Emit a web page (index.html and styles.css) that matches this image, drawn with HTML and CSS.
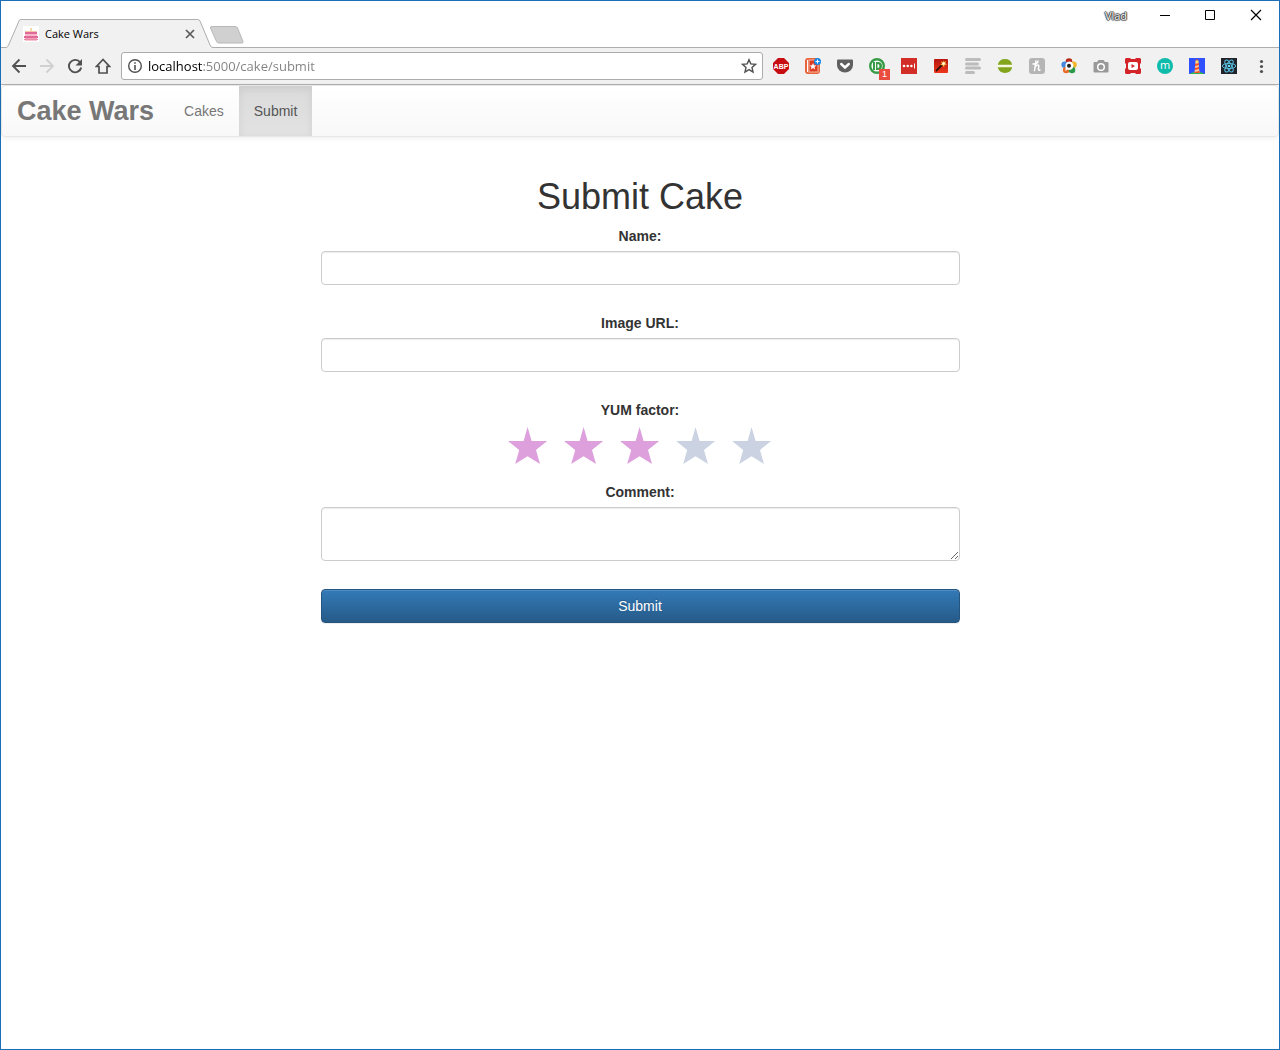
FILE: index.html
```html
<!DOCTYPE html>
<html lang="en">
<head>
<meta charset="utf-8">
<meta name="viewport" content="width=device-width, initial-scale=1">
<title>Cake Wars</title>
<link rel="stylesheet" href="styles.css">
</head>
<body>
<div class="window">
  <header class="tabstrip">
    <div class="tab">
      <svg class="tab-shape" width="208" height="29" viewBox="0 0 208 29" aria-hidden="true"><path d="M0 28.500H1.500Q3 28 4 25L14 2Q14.500.500 16 .500H192.500Q194.500.500 195 2L205 26Q206 28.500 208 28.500V29H0Z" fill="#f1f1f1"/><path d="M0 28.500H1.500Q3 28 4 25L14 2Q14.500.500 16 .500H192.500Q194.500.500 195 2L205 26Q206 28.500 208 28.500" fill="none" stroke="#aeaeae"/></svg>
      <svg class="icon" viewBox="0 0 16 16" aria-hidden="true"><path fill="#fff" d="M0 0h16v16H0z"/><path fill="#f5d7b0" d="M7 2h2v4H7z"/><path fill="#f3c6a5" d="M2 5h12v1H2z"/><path fill="#e0699a" d="M2 6h12v2H2z"/><path fill="#f6b9c8" d="M2 8h12v2H2z"/><path fill="#e0699a" d="M1 10h14v2H1z"/><path fill="#f3a0b6" d="M2 12h12v1H2z"/><path fill="#e98aa8" d="M1 13h14v1H1z"/><path fill="#f7c3cf" d="M2 14h12v1H2z"/></svg>
      <span class="tab-title">Cake Wars</span>
      <button class="tab-close" aria-label="Close tab"><svg width="10" height="10" viewBox="0 0 10 10"><path d="M1 1l8 8M9 1L1 9" stroke="#5a5a5a" stroke-width="1.700"/></svg></button>
    </div>
    <button class="new-tab" aria-label="New tab"><svg width="36" height="18" viewBox="0 0 36 18"><path d="M3 .500H26Q28 .500 28.500 2L34 15.500Q34.500 17 33 17H10Q8 17 7.500 15.500L1.500 2Q1 .500 3 .500Z" fill="#d0d0d0" stroke="#b8b8b8"/></svg></button>
    <div class="window-controls">
      <button class="profile">Vlad</button>
      <button class="control" aria-label="Minimize"><svg width="12" height="12" viewBox="0 0 12 12"><path d="M2 6.500h10" stroke="#000"/></svg></button>
      <button class="control" aria-label="Maximize"><svg width="12" height="12" viewBox="0 0 12 12"><path d="M1.500 1.500h9v9h-9z" fill="none" stroke="#000"/></svg></button>
      <button class="control" aria-label="Close"><svg width="12" height="12" viewBox="0 0 12 12"><path d="M1 1l10 10M11 1L1 11" stroke="#000" stroke-width="1.200"/></svg></button>
    </div>
  </header>

  <div class="toolbar">
    <button class="tool" aria-label="Back"><svg class="icon" viewBox="0 0 16 16"><path d="M15 8H2.500M8.500 1.500L2 8l6.500 6.500" fill="none" stroke="#505050" stroke-width="1.800"/></svg></button>
    <button class="tool" aria-label="Forward"><svg class="icon" viewBox="0 0 16 16"><path d="M1 8h12.500M7.500 1.500L14 8l-6.500 6.500" fill="none" stroke="#d0d0d0" stroke-width="1.800"/></svg></button>
    <button class="tool" aria-label="Reload"><svg class="icon" viewBox="0 0 16 16"><path d="M13.200 4.500A6.200 6.200 0 1 0 14.200 9.500" fill="none" stroke="#505050" stroke-width="1.900"/><path d="M15 1v6.500H8.500z" fill="#505050"/></svg></button>
    <button class="tool" aria-label="Home"><svg class="icon" viewBox="0 0 16 16"><path d="M8 1.500L1.500 8.500H4V15h8V8.500h2.500z" fill="none" stroke="#505050" stroke-width="1.700"/></svg></button>
    <div class="address">
      <svg class="icon" viewBox="0 0 16 16" aria-hidden="true"><circle cx="8" cy="8" r="6.300" fill="none" stroke="#505050" stroke-width="1.400"/><path d="M7.200 7h1.600v5H7.200zM7.200 4.200h1.600v1.600H7.200z" fill="#505050"/></svg>
      <input class="url" type="text" value="localhost:5000/cake/submit" aria-label="Address">
      <button class="bookmark" aria-label="Bookmark this page"><svg class="icon" viewBox="0 0 16 16"><path d="M8 1.700l1.800 4.200 4.700.4-3.500 3.100 1 4.600L8 11.600 4 14l1-4.600L1.500 6.300l4.700-.4z" fill="none" stroke="#505050" stroke-width="1.400"/></svg></button>
    </div>
    <button class="ext" aria-label="Adblock Plus"><svg class="icon" viewBox="0 0 16 16"><path d="M5 0h6l5 5v6l-5 5H5l-5-5V5z" fill="#c70d12"/><text x="8" y="11" class="abp">ABP</text></svg></button>
    <button class="ext" aria-label="Bookmark manager"><svg class="icon" viewBox="0 0 16 16"><rect width="15" height="16" rx="3" fill="#e8643c"/><path d="M2 2h1v12H2z" fill="#fff"/><rect x="4" y="2" width="9" height="12" fill="#dc3a20" stroke="#f4bba5"/><path d="M8 5l1 2.200 2.500.2-2 1.600.7 2.500L8 10l-2.200 1.500.7-2.500-2-1.600 2.500-.2z" fill="#fff"/><circle cx="12.500" cy="3.500" r="3.500" fill="#1686e8"/><path d="M12.500 1.500v4M10.500 3.500h4" stroke="#fff"/></svg></button>
    <button class="ext" aria-label="Pocket"><svg class="icon" viewBox="0 0 16 16"><path d="M1 1.500h14q1 0 1 1V7a8 7.500 0 0 1-16 0V2.500q0-1 1-1z" fill="#606060"/><path d="M4.200 6L8 9.500 11.800 6" fill="none" stroke="#fff" stroke-width="2.400" stroke-linecap="round"/></svg></button>
    <button class="ext" aria-label="Pushbullet, 1 notification"><svg class="icon" viewBox="0 0 16 16"><circle cx="8" cy="8" r="6.800" fill="#fff" stroke="#389b47" stroke-width="2.400"/><path d="M4 4h2v8H4zM7 4h2q4 0 4 4t-4 4H7z" fill="#389b47"/><path d="M8.500 6q2 0 2 2t-2 2z" fill="#fff"/></svg><span class="badge">1</span></button>
    <button class="ext" aria-label="LastPass"><svg class="icon" viewBox="0 0 16 16"><path d="M0 0h16v16H0z" fill="#d32d27"/><circle cx="3" cy="8" r="1.300" fill="#fff"/><circle cx="6.700" cy="8" r="1.300" fill="#fff"/><circle cx="10.400" cy="8" r="1.300" fill="#fff"/><path d="M13.500 5.500v5" stroke="#fff"/></svg></button>
    <button class="ext" aria-label="Magic wand"><svg class="icon" viewBox="0 0 16 16"><defs><linearGradient id="wand" x2="0" y2="1"><stop stop-color="#b5160d"/><stop offset="1" stop-color="#f0371c"/></linearGradient></defs><rect x="1" y="1" width="14" height="14" rx="1" fill="url(#wand)"/><path d="M3 13l6-6" stroke="#30100a" stroke-width="1.800"/><path d="M10 2l.8 2.200L13 3l-.8 2.200L14 6.500l-2.500.2L11 9.500 9.800 7.200 7.500 7l1.500-1.500L8 3.500l2 .7z" fill="#ffcf4a"/><circle cx="10.600" cy="5.600" r="1.200" fill="#fff"/></svg></button>
    <button class="ext" aria-label="Lines"><svg class="icon" viewBox="0 0 16 16"><path d="M1.500 1.500h13M1.500 6h11M1.500 10h13M1.500 14.500h7" stroke="#bcbcbc" stroke-width="3" stroke-linecap="round"/></svg></button>
    <button class="ext" aria-label="Green circle"><svg class="icon" viewBox="0 0 16 16"><path d="M.800 6.800a7.400 7.400 0 0 1 14.400 0z" fill="#83a51b"/><path d="M.800 9.200a7.400 7.400 0 0 0 14.400 0z" fill="#83a51b"/><path d="M0 7h16v2H0z" fill="#f5f9df"/></svg></button>
    <button class="ext" aria-label="Honey"><svg class="icon" viewBox="0 0 16 16"><rect width="16" height="16" rx="3" fill="#b5b5b5"/><path d="M7 3L5.500 12.500M6 9C8 6 10.500 6.500 9.700 9c-.7 2.500-.2 3.500 1.300 3M4 6c3 0 5-1 5-3" fill="none" stroke="#fff" stroke-width="1.500" stroke-linecap="round"/></svg></button>
    <button class="ext" aria-label="Photo colors"><svg class="icon" viewBox="0 0 16 16"><circle cx="8" cy="3.600" r="3.300" fill="#b92819"/><circle cx="3.700" cy="6.700" r="3.300" fill="#4788dd"/><circle cx="12.500" cy="6.700" r="3.300" fill="#f0b72c"/><circle cx="5.200" cy="12" r="3.300" fill="#e66b25"/><circle cx="11" cy="12" r="3.300" fill="#2d9a4a"/><path d="M8 3.500a4.200 4.200 0 1 1-1.500 8L4.500 13V7.500a4 4 0 0 1 3.500-4z" fill="#fff"/><circle cx="8" cy="7.800" r="2" fill="#202020"/></svg></button>
    <button class="ext" aria-label="Screenshot"><svg class="icon" viewBox="0 0 16 16"><path d="M1.500 4H4l1.500-2h5L12 4h2.500q1 0 1 1v8.500q0 1-1 1h-13q-1 0-1-1V5q0-1 1-1z" fill="#999"/><circle cx="8" cy="9" r="3.300" fill="none" stroke="#fff" stroke-width="1.500"/></svg></button>
    <button class="ext" aria-label="Video"><svg class="icon" viewBox="0 0 16 16"><path d="M1 0h4l1 1h4l1-1h4l1 1v4l-1 1v4l1 1v4l-1 1h-4l-1-1H6l-1 1H1l-1-1v-4l1-1V6L0 5V1z" fill="#d3242a"/><rect x="3" y="4" width="10" height="8" rx="2" fill="#fff"/><path d="M6.500 6v4L10 8z" fill="#d3242a"/></svg></button>
    <button class="ext" aria-label="Momentum"><svg class="icon" viewBox="0 0 16 16"><circle cx="8" cy="8" r="8" fill="#0fbbab"/><text x="8" y="11" class="letter">m</text></svg></button>
    <button class="ext" aria-label="Lighthouse"><svg class="icon" viewBox="0 0 16 16"><path d="M0 0h16v16H0z" fill="#304ffe"/><path d="M0 16q8-5 16 0z" fill="#2fb457"/><path d="M6.500 4h3l1 11h-5z" fill="#ffc5a0"/><path d="M6 6l4-1v2l-4 1zM6 10l4-1v2l-4 1zM5.500 14l5-1v2h-5zM6 2.500L8 1l2 1.500z" fill="#f4511e"/><path d="M6.500 2.500h3v2h-3z" fill="#ffe25e"/></svg></button>
    <button class="ext" aria-label="React Developer Tools"><svg class="icon" viewBox="0 0 16 16"><path d="M0 0h16v16H0z" fill="#20232a"/><g fill="none" stroke="#58bde0"><ellipse cx="8" cy="8" rx="6.700" ry="2.600"/><ellipse cx="8" cy="8" rx="6.700" ry="2.600" transform="rotate(60 8 8)"/><ellipse cx="8" cy="8" rx="6.700" ry="2.600" transform="rotate(120 8 8)"/></g><circle cx="8" cy="8" r="1.300" fill="#61dafb"/></svg></button>
    <button class="ext" aria-label="Menu"><svg class="icon" viewBox="0 0 16 16"><g fill="#505050"><circle cx="8.500" cy="3.500" r="1.600"/><circle cx="8.500" cy="8.500" r="1.600"/><circle cx="8.500" cy="13.500" r="1.600"/></g></svg></button>
  </div>

  <nav class="navbar">
    <a class="brand" href="#">Cake Wars</a>
    <a class="nav-link" href="#">Cakes</a>
    <a class="nav-link active" href="#">Submit</a>
  </nav>

  <main class="content">
    <h1>Submit Cake</h1>
    <form class="cake-form">
      <div class="field">
        <label for="name">Name:</label>
        <input class="form-control" id="name" type="text">
      </div>
      <div class="field">
        <label for="image">Image URL:</label>
        <input class="form-control" id="image" type="text">
      </div>
      <fieldset class="rating">
        <legend>YUM factor:</legend>
        <div class="stars">
          <input class="star" type="radio" name="yum" value="1" aria-label="1 star">
          <input class="star" type="radio" name="yum" value="2" aria-label="2 stars">
          <input class="star" type="radio" name="yum" value="3" aria-label="3 stars" checked>
          <input class="star" type="radio" name="yum" value="4" aria-label="4 stars">
          <input class="star" type="radio" name="yum" value="5" aria-label="5 stars">
        </div>
      </fieldset>
      <div class="field">
        <label for="comment">Comment:</label>
        <textarea class="form-control comment" id="comment"></textarea>
      </div>
      <button class="submit" type="submit">Submit</button>
    </form>
  </main>
</div>
</body>
</html>
```
FILE: styles.css
```css
* { box-sizing: border-box; }

body {
  margin: 0;
  font: 14px/20px "Liberation Sans", Arial, sans-serif;
  color: #333;
  background: #fff;
}

button {
  margin: 0;
  padding: 0;
  border: 0;
  background: none;
  font: inherit;
}

svg { display: block; flex: none; }

.icon { width: 16px; height: 16px; }

.window {
  min-height: 100vh;
  border: 1px solid #1a70b8;
}

/* Browser tab strip */
.tabstrip {
  display: flex;
  align-items: flex-end;
  height: 47px;
  padding-left: 4px;
  border-bottom: 1px solid #aeaeae;
}

.tab {
  position: relative;
  display: flex;
  align-items: center;
  gap: 6px;
  width: 208px;
  height: 29px;
  margin-bottom: -1px;
  padding: 0 18px;
  font: 11px/16px "Open Sans", sans-serif;
  color: #000;
}

.tab-shape {
  position: absolute;
  inset: 0;
}

.tab .icon, .tab-title, .tab-close { position: relative; }

.tab-title { flex: 1; }

.new-tab {
  margin-bottom: 3px;
  margin-left: -4px;
}

.window-controls {
  display: flex;
  align-self: flex-start;
  margin-left: auto;
}

.profile {
  width: 50px;
  font: 11px/30px "Open Sans", sans-serif;
  color: #fff;
  text-shadow: 0 0 1px #000, 1px 0 1px #555, -1px 0 1px #555, 0 1px 1px #555, 0 -1px 1px #555;
}

.control {
  display: grid;
  place-items: center;
  width: 46px;
  height: 28px;
}

/* Browser toolbar */
.toolbar {
  display: flex;
  align-items: center;
  height: 37px;
  padding: 0 2px 0 4px;
  background: #f1f1f1;
  border-bottom: 1px solid #b0b0b0;
}

.tool, .ext {
  position: relative;
  display: grid;
  place-items: center;
  flex: none;
  width: 28px;
  height: 28px;
}

.ext { width: 32px; }

.address {
  display: flex;
  align-items: center;
  flex: 1;
  gap: 5px;
  height: 28px;
  min-width: 0;
  margin: 0 2px 0 4px;
  padding: 0 5px;
  background: #fff;
  border: 1px solid #acacac;
  border-radius: 3px;
}

/* The host is black, the port and path are grey */
.url {
  flex: 1;
  min-width: 0;
  padding: 0;
  border: 0;
  outline: 0;
  font: 13px/20px "Open Sans", sans-serif;
  color: #808080;
  background: linear-gradient(90deg, #000 55px, #808080 55px);
  background-clip: text;
  -webkit-text-fill-color: transparent;
}

.badge {
  position: absolute;
  right: 3px;
  bottom: 0;
  width: 11px;
  height: 11px;
  font-size: 9px;
  line-height: 11px;
  text-align: center;
  color: #fff;
  background: #ea4c3f;
}

.abp {
  font: bold 7px "Liberation Sans", sans-serif;
  text-anchor: middle;
  fill: #fff;
}

.letter {
  font: 11px "Open Sans", sans-serif;
  text-anchor: middle;
  fill: #fff;
}

/* Site navigation */
.navbar {
  display: flex;
  height: 52px;
  border: 1px solid #e7e7e7;
  border-radius: 4px;
  background: linear-gradient(#fff, #f8f8f8);
  box-shadow: inset 0 1px 0 rgba(255, 255, 255, .15), 0 1px 5px rgba(0, 0, 0, .075);
}

.brand, .nav-link {
  padding: 0 15px;
  line-height: 50px;
  color: #777;
  text-decoration: none;
}

.brand { font-size: 27px; font-weight: bold; }

.nav-link.active {
  color: #555;
  background: linear-gradient(#dbdbdb, #e2e2e2);
  box-shadow: inset 0 3px 9px rgba(0, 0, 0, .075);
}

/* Cake form */
.content {
  width: 50%;
  margin: 0 auto;
  padding-top: 39px;
  text-align: center;
}

h1 {
  margin: 0 0 8px;
  font-size: 36px;
  font-weight: 500;
  line-height: 42px;
}

.field { margin-bottom: 28px; }

label, legend {
  display: block;
  width: 100%;
  margin-bottom: 5px;
  padding: 0;
  font-weight: bold;
}

.form-control {
  display: block;
  width: 100%;
  height: 34px;
  padding: 6px 12px;
  font: inherit;
  color: #555;
  background: #fff;
  border: 1px solid #ccc;
  border-radius: 4px;
  box-shadow: inset 0 1px 1px rgba(0, 0, 0, .075);
}

.comment { height: 54px; resize: both; }

.rating {
  margin: 0 0 18px;
  padding: 0;
  border: 0;
}

.stars {
  display: flex;
  justify-content: center;
  gap: 16px;
  padding-top: 2px;
}

.star {
  width: 40px;
  height: 37px;
  margin: 0;
  appearance: none;
  background: #cbd3e3;
  clip-path: polygon(49% 0, 59% 38%, 98% 38%, 70% 62%, 80% 100%, 49% 79%, 18% 100%, 28% 62%, 0 38%, 39% 38%);
}

.star:checked, .star:has(~ .star:checked) { background: #dda0dd; }

.submit {
  display: block;
  width: 100%;
  height: 34px;
  color: #fff;
  background: linear-gradient(#337ab7, #265a88);
  border: 1px solid #245580;
  border-radius: 4px;
  box-shadow: inset 0 1px 0 rgba(255, 255, 255, .15), 0 1px 1px rgba(0, 0, 0, .075);
  text-shadow: 0 -1px 0 rgba(0, 0, 0, .2);
}
```
